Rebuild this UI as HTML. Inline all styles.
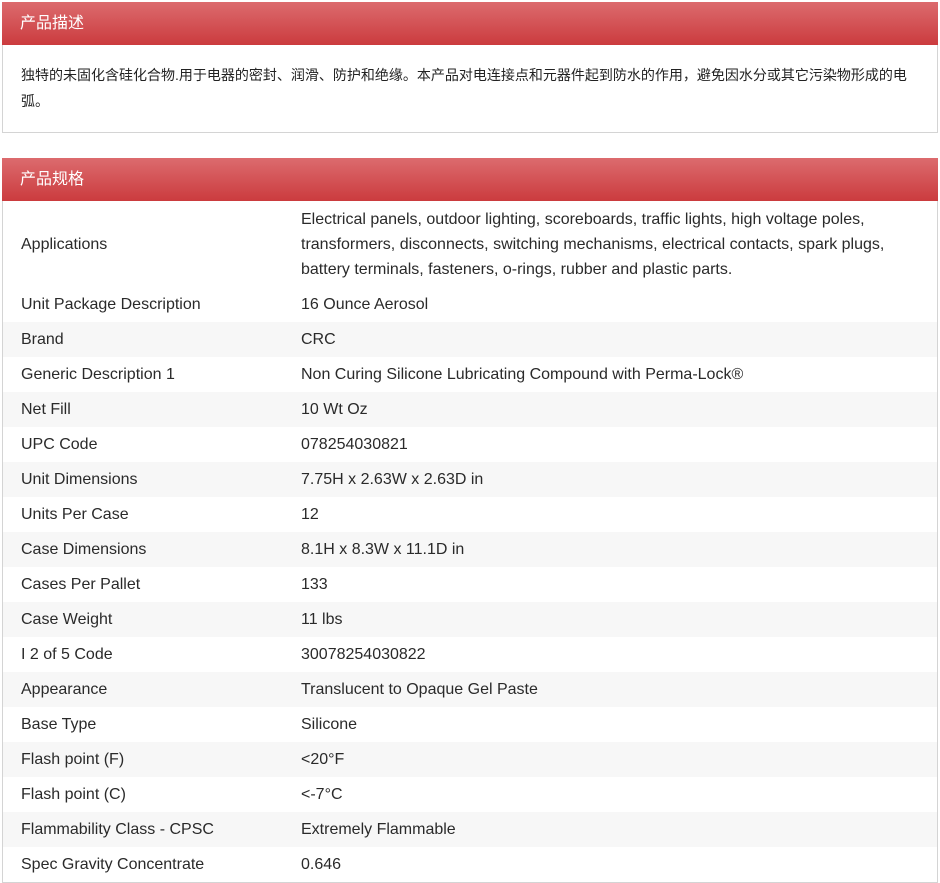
<!DOCTYPE html>
<html><head><meta charset="utf-8"><style>
body{margin:0;background:#fff;font-family:"Liberation Sans","Noto Sans CJK SC",sans-serif;width:940px;height:882px;overflow:hidden}
.panel{position:absolute;left:2px;width:934px;border:1px solid #d4d4d4;border-top:none}
.hd{height:43px;background:linear-gradient(#dc6b6e,#cb3b3e);color:#fff;font-size:16px;line-height:44px;padding-left:18px;font-family:"Liberation Sans","Noto Sans CJK SC",sans-serif;margin:0 -1px}
.desc{font-size:14px;color:#222;line-height:26px;padding:17px 18px 0 18px;height:71px}
table{border-collapse:collapse;width:100%;font-size:16px;color:#2a2a2a}
td{padding:0;height:35px;vertical-align:middle}
td.l{padding-left:18px;width:280px}
tr.app td{height:86px;line-height:25px}
</style></head><body>
<div class="panel" style="top:2px;height:130px">
<div class="hd">产品描述</div>
<div class="desc">独特的未固化含硅化合物.用于电器的密封、润滑、防护和绝缘。本产品对电连接点和元器件起到防水的作用，避免因水分或其它污染物形成的电弧。</div>
</div>
<div class="panel" style="top:158px;height:724px">
<div class="hd">产品规格</div>
<table>
<tr class="app" style="background:#fff"><td class="l">Applications</td><td>Electrical panels, outdoor lighting, scoreboards, traffic lights, high voltage poles, transformers, disconnects, switching mechanisms, electrical contacts, spark plugs, battery terminals, fasteners, o-rings, rubber and plastic parts.</td></tr>
<tr style="background:#fff"><td class="l">Unit Package Description</td><td>16 Ounce Aerosol</td></tr>
<tr style="background:#f7f7f7"><td class="l">Brand</td><td>CRC</td></tr>
<tr style="background:#fff"><td class="l">Generic Description 1</td><td>Non Curing Silicone Lubricating Compound with Perma-Lock®</td></tr>
<tr style="background:#f7f7f7"><td class="l">Net Fill</td><td>10 Wt Oz</td></tr>
<tr style="background:#fff"><td class="l">UPC Code</td><td>078254030821</td></tr>
<tr style="background:#f7f7f7"><td class="l">Unit Dimensions</td><td>7.75H x 2.63W x 2.63D in</td></tr>
<tr style="background:#fff"><td class="l">Units Per Case</td><td>12</td></tr>
<tr style="background:#f7f7f7"><td class="l">Case Dimensions</td><td>8.1H x 8.3W x 11.1D in</td></tr>
<tr style="background:#fff"><td class="l">Cases Per Pallet</td><td>133</td></tr>
<tr style="background:#f7f7f7"><td class="l">Case Weight</td><td>11 lbs</td></tr>
<tr style="background:#fff"><td class="l">I 2 of 5 Code</td><td>30078254030822</td></tr>
<tr style="background:#f7f7f7"><td class="l">Appearance</td><td>Translucent to Opaque Gel Paste</td></tr>
<tr style="background:#fff"><td class="l">Base Type</td><td>Silicone</td></tr>
<tr style="background:#f7f7f7"><td class="l">Flash point (F)</td><td>&lt;20°F</td></tr>
<tr style="background:#fff"><td class="l">Flash point (C)</td><td>&lt;-7°C</td></tr>
<tr style="background:#f7f7f7"><td class="l">Flammability Class - CPSC</td><td>Extremely Flammable</td></tr>
<tr style="background:#fff"><td class="l">Spec Gravity Concentrate</td><td>0.646</td></tr>
</table>
</div>
</body></html>
